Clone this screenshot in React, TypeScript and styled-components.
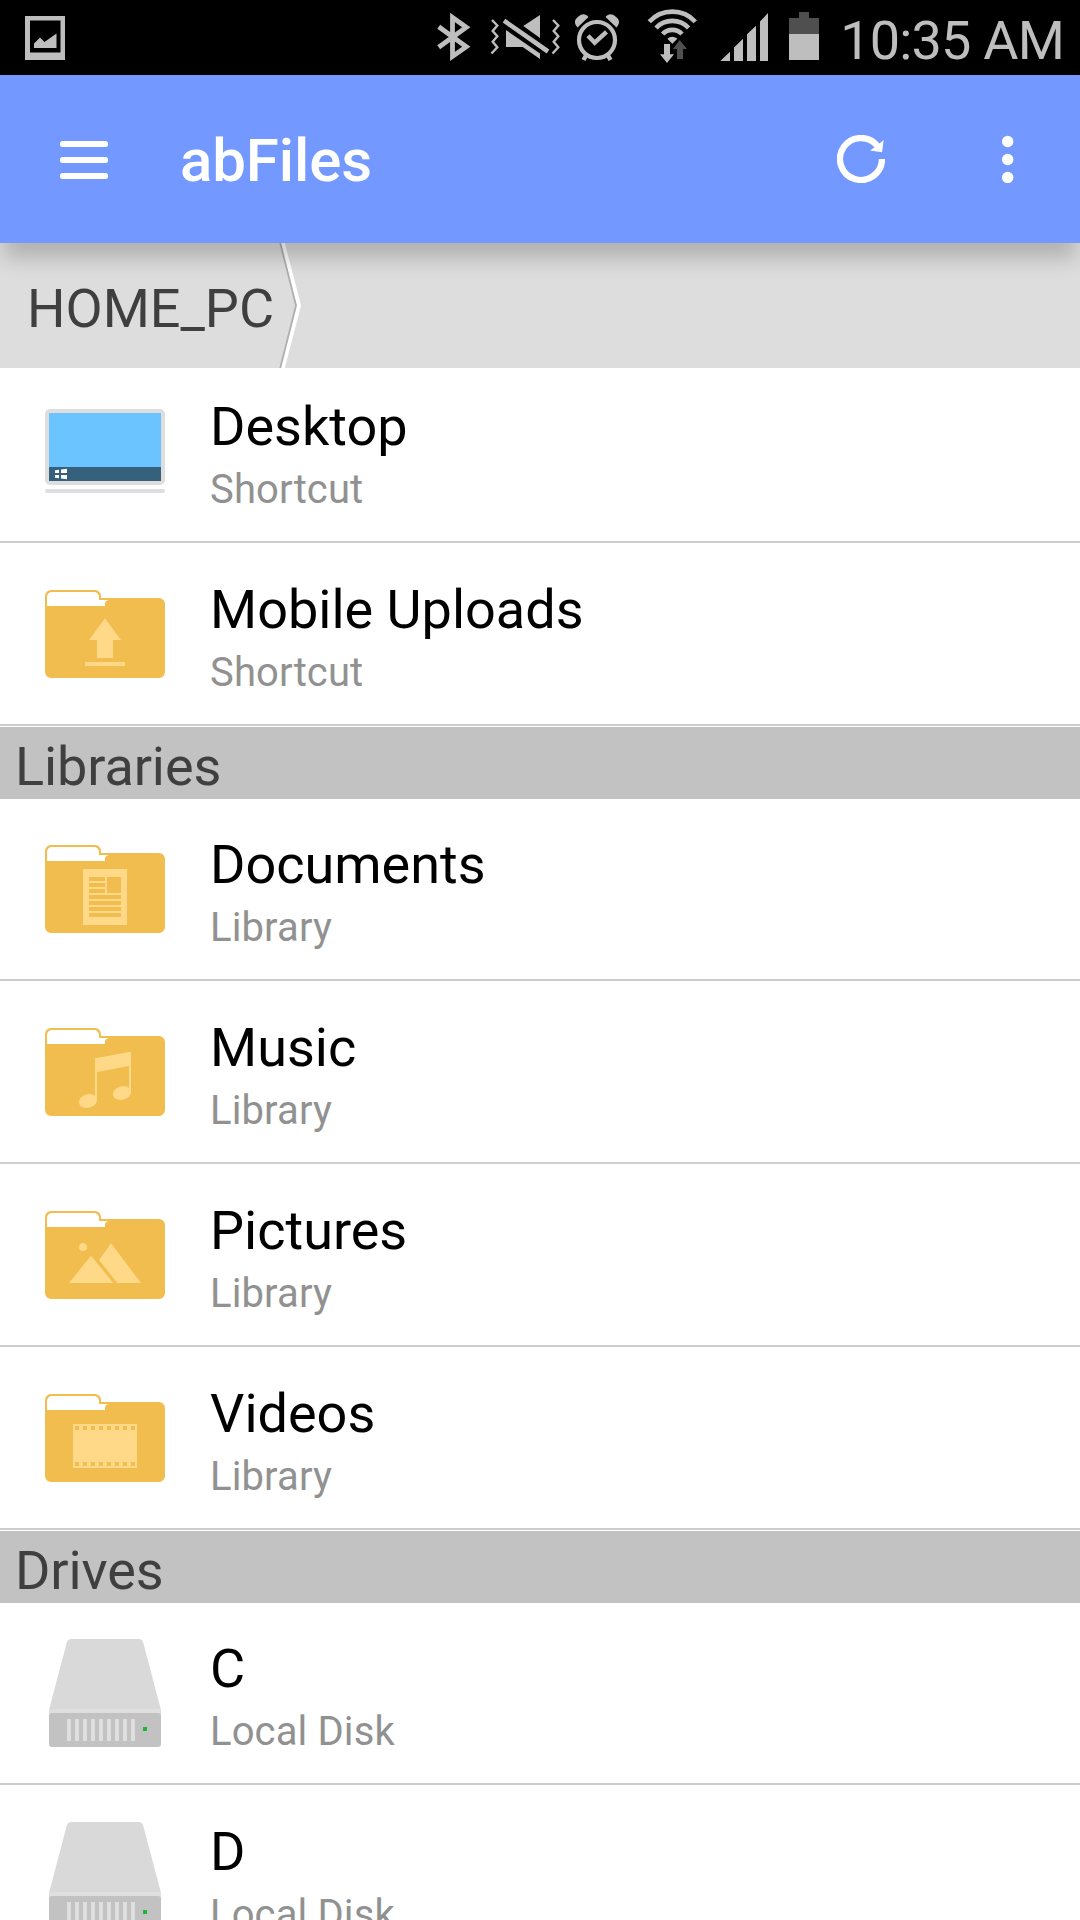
import React from "react";
import styled, { createGlobalStyle } from "styled-components";

const GlobalStyle = createGlobalStyle`
  body {
    margin: 0;
    background: #fff;
    font-family: Roboto, "Noto Sans", sans-serif;
    overflow: hidden;
  }
`;

const Screen = styled.div`
  width: 1080px;
  height: 1920px;
  overflow: hidden;
  display: flex;
  flex-direction: column;
  background: #fff;
`;

const StatusBar = styled.div`
  flex: none;
  height: 75px;
  display: flex;
  align-items: center;
  background: #000;
  color: #bebebe;
`;

const StatusSpacer = styled.div`
  flex: 1;
`;

const StatusGlyph = styled.svg`
  flex: none;
  display: block;
  height: 75px;
  fill: #bebebe;
`;

const Clock = styled.div`
  width: 250px;
  box-sizing: border-box;
  padding: 7px 16px 0 0;
  text-align: right;
  font-size: 54px;
  line-height: 70px;
  font-weight: 400;
  letter-spacing: -0.8px;
  white-space: nowrap;
`;

const AppBar = styled.header`
  flex: none;
  height: 168px;
  box-sizing: border-box;
  padding: 0 66px 0 60px;
  display: flex;
  align-items: center;
  background: #7398ff;
  color: #fff;
  position: relative;
  z-index: 1;
  box-shadow: 0 19px 20px -4px rgba(0, 0, 0, 0.2);
`;

const BarButton = styled.button`
  padding: 0;
  border: 0;
  background: none;
  color: inherit;
  display: block;

  svg {
    display: block;
    fill: currentColor;
  }
`;

const Title = styled.h1`
  flex: 1;
  margin: 4px 0 0 72px;
  font-size: 60px;
  line-height: 70px;
  font-weight: 500;
  letter-spacing: -0.1px;
`;

const Actions = styled.div`
  display: flex;
  gap: 117px;
`;

const Breadcrumbs = styled.nav`
  flex: none;
  height: 125px;
  display: flex;
  background: #ddd;
`;

const Crumb = styled.div`
  padding: 34px 5px 0 27px;
  font-size: 54px;
  line-height: 64px;
  color: #3f3f3f;
`;

const Chevron = styled.svg`
  display: block;
  fill: none;
`;

const List = styled.main`
  margin-top: -8px;
`;

const SectionHeader = styled.h2`
  height: 72px;
  box-sizing: border-box;
  margin: 1px 0 -1px;
  padding: 8px 16px 0 15px;
  background: #c2c2c2;
  color: #3f3f3f;
  font-size: 54px;
  line-height: 64px;
  font-weight: 400;
  letter-spacing: -0.1px;
`;

const Row = styled.div`
  height: 183px;
  box-sizing: border-box;
  padding: 30px 45px 0;
  display: flex;
  gap: 45px;
  border-bottom: 2px solid #cdcdcd;
`;

const RowIcon = styled.svg`
  flex: none;
  display: block;
`;

const RowText = styled.div`
  padding-top: 5px;
`;

const Name = styled.div`
  font-size: 54px;
  line-height: 64px;
  color: #000;
`;

const Detail = styled.div`
  margin-top: 7px;
  font-size: 40px;
  line-height: 47px;
  letter-spacing: 0.13px;
  color: #919191;
`;

const PALE = "#ffd987";
const GOLD = "#f2bd4f";

type Kind = "desktop" | "upload" | "documents" | "music" | "pictures" | "videos" | "drive";

const range = (n: number) => Array.from({ length: n }, (_, i) => i);

function Desktop() {
  return (
    <>
      <rect y="19" width="120" height="76" rx="5" fill="#dedede" />
      <rect x="4" y="23" width="112" height="54" fill="#6bc3ff" />
      <rect x="4" y="77" width="112" height="14" fill="#35617d" />
      <path d="M10 80.2l4-.5V83h-4zM16 79.5l6-.7V83h-6zM10 85h4v3.3l-4-.5zM16 85h6v4.2l-6-.7z" fill="#fff" />
      <rect y="99" width="120" height="4" rx="2" fill="#dedede" />
    </>
  );
}

function Drive() {
  return (
    <>
      <path d="M4 78L21.8 10.5Q23 7 26 7H94Q97 7 98.2 10.5L116 78V84H4Z" fill="#d9d9d9" />
      <rect x="4" y="77" width="112" height="8" fill="#dfdfdf" />
      <rect x="4" y="81" width="112" height="34" rx="3" fill="#c2c2c2" />
      {range(9).map((i) => (
        <rect key={i} x={22 + i * 8} y="87" width="4" height="22" fill="#dfdfdf" />
      ))}
      <rect x="98" y="95" width="4" height="4" fill="#19b733" />
    </>
  );
}

function Folder({ children }: { children: React.ReactNode }) {
  return (
    <>
      <path
        d="M0 23a6 6 0 0 1 6-6H50a6 6 0 0 1 6 6V25H114a6 6 0 0 1 6 6V99a6 6 0 0 1-6 6H6a6 6 0 0 1-6-6Z"
        fill={GOLD}
      />
      <path d="M2 33V24a5 5 0 0 1 5-5H49a5 5 0 0 1 5 5V27H64Q60 27.500 60 31V33Z" fill="#fff" />
      <g fill={PALE}>{children}</g>
    </>
  );
}

const artwork: Record<Kind, React.ReactNode> = {
  desktop: <Desktop />,
  drive: <Drive />,
  upload: (
    <Folder>
      <path d="M60 45.300L76 67H68V85H52V67H44ZM40 89H80V93H40Z" />
    </Folder>
  ),
  documents: (
    <Folder>
      <rect x="38" y="41" width="44" height="56" />
      <path
        d="M44 49h16v4H44zM44 55h16v4H44zM44 61h16v4H44zM62 49h14v16H62zM44 67h32v4H44zM44 73h32v4H44zM44 79h32v4H44zM44 85h32v4H44z"
        fill={GOLD}
      />
    </Folder>
  ),
  music: (
    <Folder>
      <path d="M50 47.300L86 40.700V82H84V55L52 61V90H50Z" />
      <ellipse cx="43" cy="90" rx="9.200" ry="6.800" transform="rotate(-15 43 90)" />
      <ellipse cx="77" cy="82" rx="9.200" ry="6.800" transform="rotate(-15 77 82)" />
    </Folder>
  ),
  pictures: (
    <Folder>
      <circle cx="38" cy="53" r="4" />
      <path d="M24 89L46 61.700L68.300 89ZM66 49.300L96 89H72.300L54 66Z" />
    </Folder>
  ),
  videos: (
    <Folder>
      <rect x="28" y="47" width="64" height="44" />
      {range(8).map((i) => (
        <path key={i} d={`M${30 + i * 8} 49h4v4h-4zm0 36h4v4h-4z`} fill={GOLD} />
      ))}
    </Folder>
  ),
};

function Entry({ kind, name, detail }: { kind: Kind; name: string; detail: string }) {
  return (
    <Row>
      <RowIcon width="120" height="120" viewBox="0 0 120 120">
        {artwork[kind]}
      </RowIcon>
      <RowText>
        <Name>{name}</Name>
        <Detail>{detail}</Detail>
      </RowText>
    </Row>
  );
}

function StatusIcons() {
  return (
    <>
      <StatusGlyph width="90" viewBox="0 0 90 75">
        <path fillRule="evenodd" d="M25 16H65V60H25ZM30 20.500V52.500H60.500V20.500Z" />
        <path d="M34 48V43.500L40 37.500L44.500 42L56.500 33.500V48Z" />
      </StatusGlyph>
      <StatusSpacer />
      <StatusGlyph width="54" viewBox="430 0 54 75">
        <path
          d="M438.700 26.700L466.300 46.800L452.500 56.500V17.500L466.300 27.300L438.700 47.300"
          fill="none"
          stroke="#bebebe"
          strokeWidth="4.800"
          strokeMiterlimit="10"
        />
      </StatusGlyph>
      <StatusGlyph width="82" viewBox="484 0 82 75">
        <path d="M540 15V38L523.300 26ZM506 30L540 53.500V59L522.700 47H506Z" />
        <path
          d="M492 20L497.300 25.500L492.700 31L497.300 36.300L492.700 41.700L497.300 47.200L491.500 53.500M553 20L558.300 25.500L553.700 31L558.300 36.300L553.700 41.700L558.300 47.200L552.500 53.500"
          fill="none"
          stroke="#bebebe"
          strokeWidth="2.400"
        />
        <path d="M502.500 23.500L545.500 53.500L549 48.500" fill="none" stroke="#000" strokeWidth="0" />
        <path d="M504 20.700L548 51.500" stroke="#bebebe" strokeWidth="4.600" />
      </StatusGlyph>
      <StatusGlyph width="64" viewBox="566 0 64 75">
        <circle cx="597" cy="40" r="18" fill="none" stroke="#bebebe" strokeWidth="4.200" />
        <path
          d="M588 35.700L594.700 42.700L606.500 31.800M586.500 54.500L583.500 60M607.500 54.500L610.500 60"
          fill="none"
          stroke="#bebebe"
          strokeWidth="4.400"
        />
        <path d="M577.500 27.500C573.500 23 574.500 19.500 578.500 16.500C582 13.500 585.500 13.500 588.500 17ZM616.500 27.500C620.500 23 619.500 19.500 615.500 16.500C612 13.500 608.500 13.500 605.500 17Z" />
      </StatusGlyph>
      <StatusGlyph width="80" viewBox="630 0 80 75">
        <path
          d="M649.300 21.700A31.300 31.300 0 0 1 695.300 21.700M656 28A22.300 22.300 0 0 1 688.600 28M662.600 34A13.400 13.400 0 0 1 682 34"
          fill="none"
          stroke="#bebebe"
          strokeWidth="4.600"
        />
        <path d="M667.300 38.800A7 7 0 0 1 677.300 38.800L672.300 43.800Z" />
        <path d="M664 44H670V54.300H674L667 63L660 54.300H664Z" />
        <path d="M679.700 40L687 49H683V59H677V49H673Z" fill="#4f4f4f" />
      </StatusGlyph>
      <StatusGlyph width="68" viewBox="710 0 68 75">
        <path d="M720.300 61L730 51.700V61ZM734 61V47.500L743 38.700V61ZM747 61V34.300L756 25.700V61ZM760 61V21.500L768 13V61Z" />
      </StatusGlyph>
      <StatusGlyph width="52" viewBox="778 0 52 75">
        <path d="M799 12H809V18H819V34H789V18H799Z" fill="#4f4f4f" />
        <rect x="789" y="34" width="30" height="26" />
      </StatusGlyph>
    </>
  );
}

export default function App() {
  return (
    <>
      <GlobalStyle />
      <Screen>
        <StatusBar>
          <StatusIcons />
          <Clock>10:35 AM</Clock>
        </StatusBar>
        <AppBar>
          <BarButton aria-label="Menu">
            <svg width="48" height="48">
              <rect y="6" width="48" height="6" rx="2.500" />
              <rect y="22" width="48" height="6" rx="2.500" />
              <rect y="38" width="48" height="6" rx="2.500" />
            </svg>
          </BarButton>
          <Title>abFiles</Title>
          <Actions>
            <BarButton aria-label="Refresh">
              <svg width="48" height="48">
                <path
                  d="M45 24A21 21 0 1 1 40.500 11"
                  fill="none"
                  stroke="currentColor"
                  strokeWidth="6.300"
                />
                <path d="M46.700 5L45 17.200L33 15.500L37.300 12.500L42.500 8.500Z" />
              </svg>
            </BarButton>
            <BarButton aria-label="More options">
              <svg width="12" height="48">
                <circle cx="5.700" cy="6.500" r="5.700" />
                <circle cx="5.700" cy="24.500" r="5.700" />
                <circle cx="5.700" cy="42.500" r="5.700" />
              </svg>
            </BarButton>
          </Actions>
        </AppBar>
        <Breadcrumbs>
          <Crumb>HOME_PC</Crumb>
          <Chevron width="24" height="125" viewBox="0 0 24 125">
            <path d="M3.500 -1L20 62.500L3.500 126" stroke="#fff" strokeWidth="4" />
            <path d="M1 -1L17 62.500L1 126" stroke="#b0b0b0" strokeWidth="1.800" />
          </Chevron>
        </Breadcrumbs>
        <List>
          <Entry kind="desktop" name="Desktop" detail="Shortcut" />
          <Entry kind="upload" name="Mobile Uploads" detail="Shortcut" />
          <SectionHeader>Libraries</SectionHeader>
          <Entry kind="documents" name="Documents" detail="Library" />
          <Entry kind="music" name="Music" detail="Library" />
          <Entry kind="pictures" name="Pictures" detail="Library" />
          <Entry kind="videos" name="Videos" detail="Library" />
          <SectionHeader>Drives</SectionHeader>
          <Entry kind="drive" name="C" detail="Local Disk" />
          <Entry kind="drive" name="D" detail="Local Disk" />
        </List>
      </Screen>
    </>
  );
}
